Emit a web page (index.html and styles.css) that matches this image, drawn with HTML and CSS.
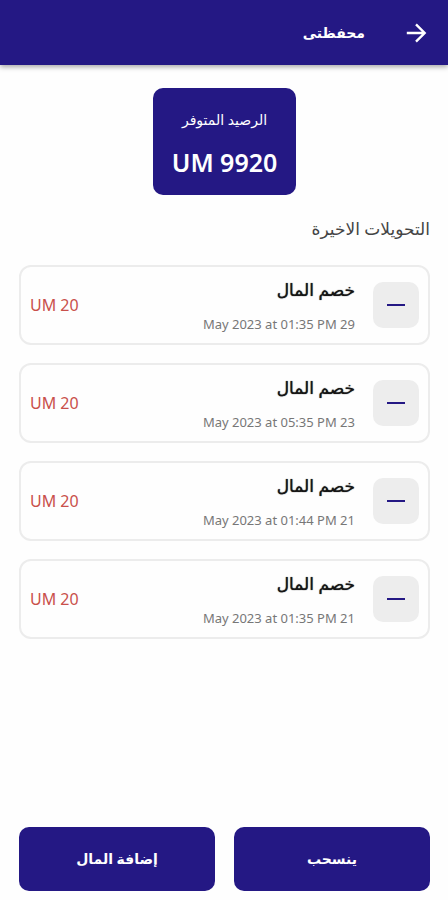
FILE: index.html
```html
<!DOCTYPE html>
<html lang="ar" dir="rtl">
<head>
<meta charset="utf-8">
<meta name="viewport" content="width=device-width, initial-scale=1">
<title>محفظتى</title>
<link rel="stylesheet" href="styles.css">
</head>
<body>
<header class="app-bar">
  <button class="back" type="button" aria-label="رجوع">
    <svg viewBox="0 0 24 24" width="26" height="26" aria-hidden="true"><path d="M3.5 12H20M12 4l8 8-8 8" fill="none" stroke="currentColor" stroke-width="2.2"/></svg>
  </button>
  <h1 class="title">محفظتى</h1>
</header>
<main class="content">
  <section class="balance">
    <p class="balance-label">الرصيد المتوفر</p>
    <p class="balance-value">UM 9920</p>
  </section>
  <h2 class="section-title">التحويلات الاخيرة</h2>
  <ul class="list">
    <li class="card">
      <span class="badge"><svg viewBox="0 0 18 2" width="18" height="2" aria-hidden="true"><rect width="18" height="2"/></svg></span>
      <div class="info"><h3 class="name">خصم المال</h3><p class="date" dir="ltr">May 2023 at 01:35 PM 29</p></div>
      <span class="amount" dir="ltr">UM 20</span>
    </li>
    <li class="card">
      <span class="badge"><svg viewBox="0 0 18 2" width="18" height="2" aria-hidden="true"><rect width="18" height="2"/></svg></span>
      <div class="info"><h3 class="name">خصم المال</h3><p class="date" dir="ltr">May 2023 at 05:35 PM 23</p></div>
      <span class="amount" dir="ltr">UM 20</span>
    </li>
    <li class="card">
      <span class="badge"><svg viewBox="0 0 18 2" width="18" height="2" aria-hidden="true"><rect width="18" height="2"/></svg></span>
      <div class="info"><h3 class="name">خصم المال</h3><p class="date" dir="ltr">May 2023 at 01:44 PM 21</p></div>
      <span class="amount" dir="ltr">UM 20</span>
    </li>
    <li class="card">
      <span class="badge"><svg viewBox="0 0 18 2" width="18" height="2" aria-hidden="true"><rect width="18" height="2"/></svg></span>
      <div class="info"><h3 class="name">خصم المال</h3><p class="date" dir="ltr">May 2023 at 01:35 PM 21</p></div>
      <span class="amount" dir="ltr">UM 20</span>
    </li>
  </ul>
</main>
<footer class="actions">
  <button class="action" type="button">ينسحب</button>
  <button class="action" type="button">إضافة المال</button>
</footer>
</body>
</html>
```
FILE: styles.css
```css
* {
  box-sizing: border-box;
  margin: 0;
  padding: 0;
}

body {
  min-height: 100vh;
  display: flex;
  flex-direction: column;
  background: #fefefe;
  color: #151515;
  font-family: "Noto Sans", "DejaVu Sans", sans-serif;
}

button {
  border: 0;
  color: inherit;
  font: inherit;
  cursor: pointer;
}

.app-bar {
  display: flex;
  align-items: center;
  gap: 38px;
  height: 65px;
  padding: 0 19px;
  background: #241884;
  color: #fff;
  box-shadow: 0 2px 5px rgba(0, 0, 0, 0.35);
}

.back {
  display: flex;
  background: none;
}

.title {
  font-size: 14px;
  line-height: 24px;
}

.content {
  flex: 1;
  display: flex;
  flex-direction: column;
  padding: 23px 18px 24px 19px;
}

.balance {
  align-self: center;
  padding: 20px 19px 15px;
  border-radius: 10px;
  background: #241884;
  color: #fff;
  text-align: center;
}

.balance-label {
  font-size: 14px;
  line-height: 24px;
}

.balance-value {
  margin-top: 12px;
  font-size: 25px;
  font-weight: 600;
  line-height: 36px;
}

.section-title {
  margin-top: 20px;
  color: #444;
  font-size: 17px;
  font-weight: 400;
  line-height: 28px;
}

.list {
  display: grid;
  gap: 18px;
  margin-top: 22px;
  list-style: none;
}

.card {
  display: flex;
  align-items: center;
  gap: 18px;
  height: 80px;
  padding: 0 9px;
  border: 2px solid #ececec;
  border-radius: 12px;
}

.badge {
  display: grid;
  place-items: center;
  width: 46px;
  height: 46px;
  border-radius: 10px;
  background: #ededed;
  fill: #241884;
}

.info {
  flex: 1;
}

.name {
  font-size: 17px;
  font-weight: 500;
  line-height: 28px;
  text-shadow: 0 0 1px #151515;
}

.date {
  margin-top: 10px;
  color: #777;
  font-size: 13px;
  line-height: 20px;
  text-align: right;
}

.amount {
  color: #c9504b;
  font-size: 16px;
  line-height: 24px;
}

.actions {
  display: grid;
  grid-template-columns: 1fr 1fr;
  gap: 19px;
  padding: 0 18px 9px 19px;
}

.action {
  height: 64px;
  padding-bottom: 2px;
  border-radius: 10px;
  background: #241884;
  color: #fff;
  font-size: 14px;
  font-weight: 700;
}
```
